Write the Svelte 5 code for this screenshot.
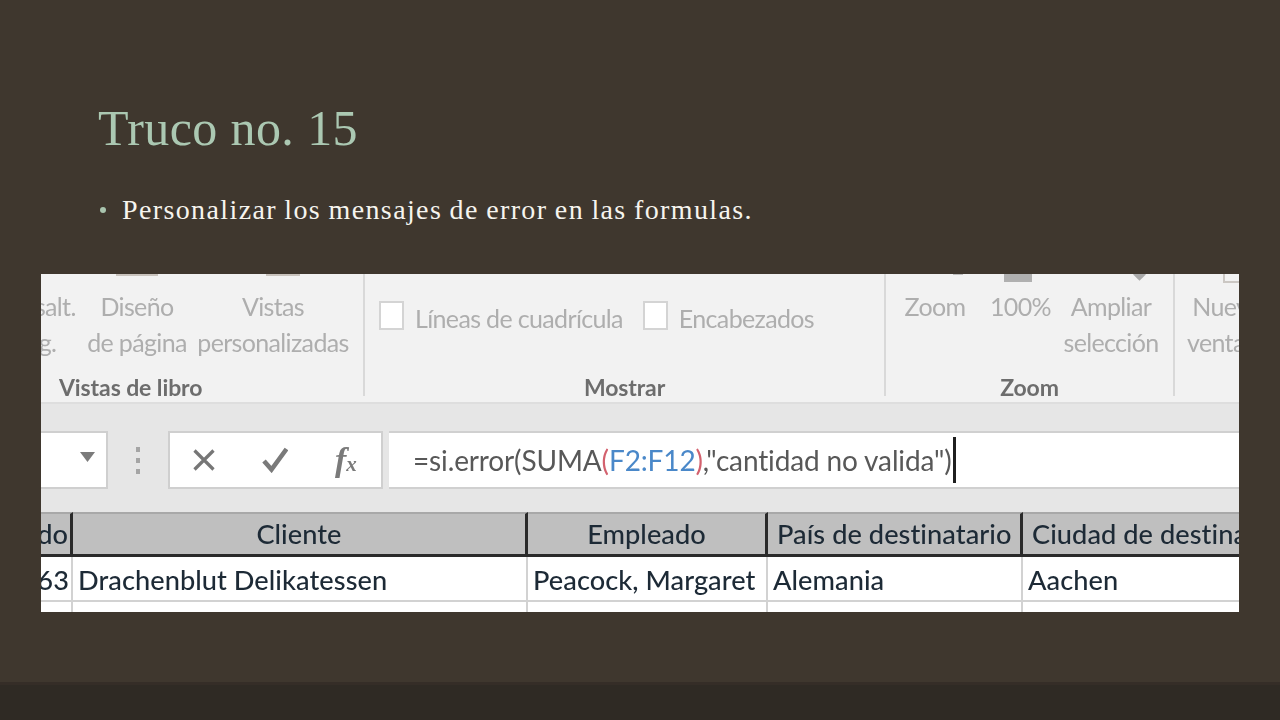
<script lang="ts">
  const columns = [
    { head: 'do', cell: '63', cls: 'c-id' },
    { head: 'Cliente', cell: 'Drachenblut Delikatessen', cls: 'c-center' },
    { head: 'Empleado', cell: 'Peacock, Margaret', cls: 'c-center' },
    { head: 'País de destinatario', cell: 'Alemania', cls: '' },
    { head: 'Ciudad de destinatario', cell: 'Aachen', cls: '' },
  ];
</script>

<main class="slide">
  <h1>Truco no. 15</h1>
  <ul>
    <li>Personalizar los mensajes de error en las formulas.</li>
  </ul>

  <figure class="shot">
    <!-- ribbon of the spreadsheet, cut off on every side -->
    <div class="ribbon">
      <section class="group g-book">
        <div class="tools">
          <div class="btn b-salt">Ver salt.<br />pág.</div>
          <div class="btn b-page"><i class="stub"></i>Diseño<br />de página</div>
          <div class="btn b-views"><i class="stub s-views"></i>Vistas<br />personalizadas</div>
        </div>
        <div class="label">Vistas de libro</div>
      </section>
      <section class="group g-show">
        <div class="tools checks">
          <span class="box"></span><span class="chk c1">Líneas de cuadrícula</span>
          <span class="box"></span><span class="chk">Encabezados</span>
        </div>
        <div class="label">Mostrar</div>
      </section>
      <section class="group g-zoom">
        <div class="tools">
          <div class="btn b-zoom"><i class="stub s-arc"></i>Zoom</div>
          <div class="btn b-100"><i class="stub solid"></i>100%</div>
          <div class="btn b-fit"><i class="stub s-diamond"></i>Ampliar<br />selección</div>
        </div>
        <div class="label">Zoom</div>
      </section>
      <section class="group g-win">
        <div class="tools">
          <div class="btn b-new"><i class="stub s-new"></i>Nueva<br />ventana</div>
        </div>
      </section>
    </div>

    <div class="formula-strip">
      <div class="namebox">
        <svg width="15" height="10" viewBox="0 0 15 10"><path d="M0 0h15L7.5 10z" fill="#7b7b7b" /></svg>
      </div>
      <div class="grip"><i></i><i></i><i></i></div>
      <div class="fx-buttons">
        <svg width="22" height="22" viewBox="0 0 22 22"><path d="M1.500 1.500l19 19M20.500 1.500l-19 19" stroke="#767676" stroke-width="3.200" fill="none" /></svg>
        <svg width="26" height="26" viewBox="0 0 26 26"><path d="M2 14l7.500 8.500L24.500 2" stroke="#7a7a7a" stroke-width="4.600" fill="none" /></svg>
        <span class="fx">f<small>x</small></span>
      </div>
      <div class="input">
        <span class="expr">=si.error(SUMA<span class="red">(</span><span class="blue">F2:F12</span><span class="red">)</span>,"cantidad no valida")</span><span class="caret"></span>
      </div>
    </div>

    <div class="table">
      {#each columns as col}
        <div class="th {col.cls}">{col.head}</div>
      {/each}
      {#each columns as col}
        <div class="td {col.cls}">{col.cell}</div>
      {/each}
      {#each columns as col}
        <div class="td empty"></div>
      {/each}
    </div>
  </figure>

  <footer></footer>
</main>

<style>
  :global(body) {
    margin: 0;
    background: #3f372e;
  }
  .slide {
    width: 1280px;
    height: 720px;
    overflow: hidden;
    display: flex;
    flex-direction: column;
    background: #3f372e;
    font-family: "Liberation Serif", serif;
  }
  h1 {
    margin: 98px 0 0 98px;
    font-size: 50px;
    line-height: 60px;
    font-weight: 400;
    letter-spacing: 0.4px;
    color: #abc8b2;
  }
  ul {
    list-style: none;
    margin: 37px 0 0 98px;
    padding: 0;
  }
  li {
    position: relative;
    padding-left: 24px;
    font-size: 28px;
    line-height: 30px;
    letter-spacing: 1.38px;
    word-spacing: -1px;
    color: #f6f4ee;
  }
  li::before {
    content: "";
    position: absolute;
    left: 2px;
    top: 12px;
    width: 6px;
    height: 6px;
    border-radius: 50%;
    background: #a9c4ae;
  }

  .shot {
    margin: 49px 0 0 41px;
    width: 1198px;
    height: 338px;
    overflow: hidden;
    background: #fff;
    font-family: Lato, "Open Sans", sans-serif;
    font-variant-ligatures: none;
    filter: blur(0.45px);
  }

  .ribbon {
    display: flex;
    height: 130px;
    background: #f2f2f2;
    border-bottom: 2px solid #dedede;
    box-sizing: border-box;
  }
  .group {
    position: relative;
    display: flex;
    flex-direction: column;
    flex: none;
    height: 122px;
    border-right: 2px solid #d9d9d9;
  }
  .g-book { width: 322px; }
  .g-show { width: 519px; }
  .g-zoom { width: 287px; }
  .g-win { flex: 1; border-right: 0; }
  .tools {
    display: flex;
    flex: none;
    height: 103px;
    padding-top: 14px;
    box-sizing: border-box;
  }
  .label {
    flex: none;
    text-align: center;
    font-size: 23px;
    line-height: 20px;
    font-weight: 700;
    color: #6d6d6d;
    letter-spacing: -0.1px;
  }
  .g-book .label { text-align: left; padding-left: 18px; }
  .btn {
    position: relative;
    flex: none;
    text-align: center;
    white-space: nowrap;
    font-size: 25px;
    line-height: 36px;
    color: #aeaeae;
    letter-spacing: -0.65px;
  }
  .stub {
    position: absolute;
    top: -14px;
    left: 50%;
    width: 42px;
    height: 2px;
    margin-left: -21px;
    background: #c9c3bd;
  }
  .stub.s-views { width: 34px; margin-left: -7px; }
  .stub.solid {
    width: 28px;
    height: 8px;
    margin-left: -14px;
    background: #b0b0b0;
  }
  .stub.s-arc {
    width: 10px;
    height: 1px;
    margin-left: 18px;
    background: #bdbdbd;
  }
  .stub.s-diamond {
    top: -18px;
    width: 9px;
    height: 9px;
    margin-left: 24px;
    background: #a9a9a9;
    transform: rotate(45deg);
  }
  .stub.s-new {
    width: 30px;
    height: 7px;
    margin-left: -3px;
    background: transparent;
    border: solid #cbc7c3;
    border-width: 0 0 2px 2px;
  }
  .b-salt { width: 84px; margin-left: -48px; }
  .b-page { width: 110px; margin-left: 5px; }
  .b-views { width: 156px; margin-left: 3px; }
  .checks {
    align-items: center;
    padding: 0 0 20px 14px;
    font-size: 25px;
    color: #aeaeae;
    letter-spacing: -0.65px;
  }
  .box {
    flex: none;
    width: 21px;
    height: 25px;
    background: #fff;
    border: 2px solid #d4d4d4;
  }
  .chk { margin-left: 11px; padding-top: 4px; white-space: nowrap; }
  .c1 { margin-right: 20px; }
  .b-zoom { width: 64px; margin-left: 17px; }
  .b-100 { width: 56px; margin-left: 23px; }
  .b-fit { width: 100px; margin-left: 15px; }
  .b-new { width: 78px; margin-left: 12px; }

  .formula-strip {
    display: flex;
    align-items: flex-start;
    height: 108px;
    box-sizing: border-box;
    padding-top: 27px;
    background: #e6e6e6;
  }
  .namebox {
    display: flex;
    justify-content: flex-end;
    align-items: center;
    box-sizing: border-box;
    width: 67px;
    height: 58px;
    padding: 0 11px 6px 0;
    background: #fff;
    border: solid #cfcfcf;
    border-width: 2px 2px 2px 0;
  }
  .grip {
    display: flex;
    flex-direction: column;
    gap: 6px;
    width: 60px;
    align-items: center;
    padding-top: 16px;
  }
  .grip i {
    width: 4px;
    height: 5px;
    background: #a5a5a5;
  }
  .fx-buttons {
    display: flex;
    align-items: center;
    box-sizing: border-box;
    width: 215px;
    height: 58px;
    padding-left: 23px;
    gap: 47px;
    background: #fff;
    border: 2px solid #cfcfcf;
  }
  .fx {
    font-family: "Liberation Serif", serif;
    font-style: italic;
    font-weight: 700;
    font-size: 34px;
    line-height: 1;
    color: #7a7a7a;
  }
  .fx small { font-size: 21px; }
  .input {
    display: flex;
    align-items: center;
    box-sizing: border-box;
    flex: 1;
    margin-left: 6px;
    height: 58px;
    padding-left: 24px;
    background: #fff;
    border: solid #d0d0d0;
    border-width: 2px 0;
  }
  .expr {
    font-size: 28px;
    line-height: 40px;
    white-space: nowrap;
    letter-spacing: -0.14px;
    color: #585858;
  }
  .red { color: #d3616e; }
  .blue { color: #4a88c9; }
  .caret {
    width: 3px;
    height: 46px;
    margin-left: 1px;
    background: #1f1f1f;
  }

  .table {
    display: grid;
    grid-template-columns: 32px 455px 240px 255px 216px;
    grid-template-rows: 45px 45px 20px;
    font-size: 27.2px;
    font-weight: 500;
    letter-spacing: 0.05px;
    color: #1d2a36;
    white-space: nowrap;
  }
  .th {
    display: flex;
    align-items: center;
    padding: 0 0 1px 9px;
    box-sizing: border-box;
    overflow: hidden;
    background: #bfbfbf;
    border-top: 2px solid #a8a8a8;
    border-bottom: 3px solid #2a2a2a;
    border-right: 3px solid #2a2a2a;
  }
  .th:nth-child(5) { border-right: 0; }
  .th.c-id { justify-content: flex-end; padding: 0 2px 1px 0; }
  .th.c-center { justify-content: center; padding-left: 0; }
  .td {
    display: flex;
    align-items: center;
    padding: 2px 0 0 5px;
    overflow: hidden;
    box-sizing: border-box;
    background: #fff;
    border-right: 2px solid #d2d2d2;
    border-bottom: 2px solid #d2d2d2;
  }
  .td:nth-child(5n) { border-right: 0; }
  .td.c-id { justify-content: flex-end; padding: 2px 2px 0 0; }
  .td.empty { border-bottom: 0; }

  footer {
    margin-top: auto;
    height: 38px;
    box-sizing: border-box;
    background: #2f2a24;
    border-top: 3px solid #352d27;
  }
</style>
